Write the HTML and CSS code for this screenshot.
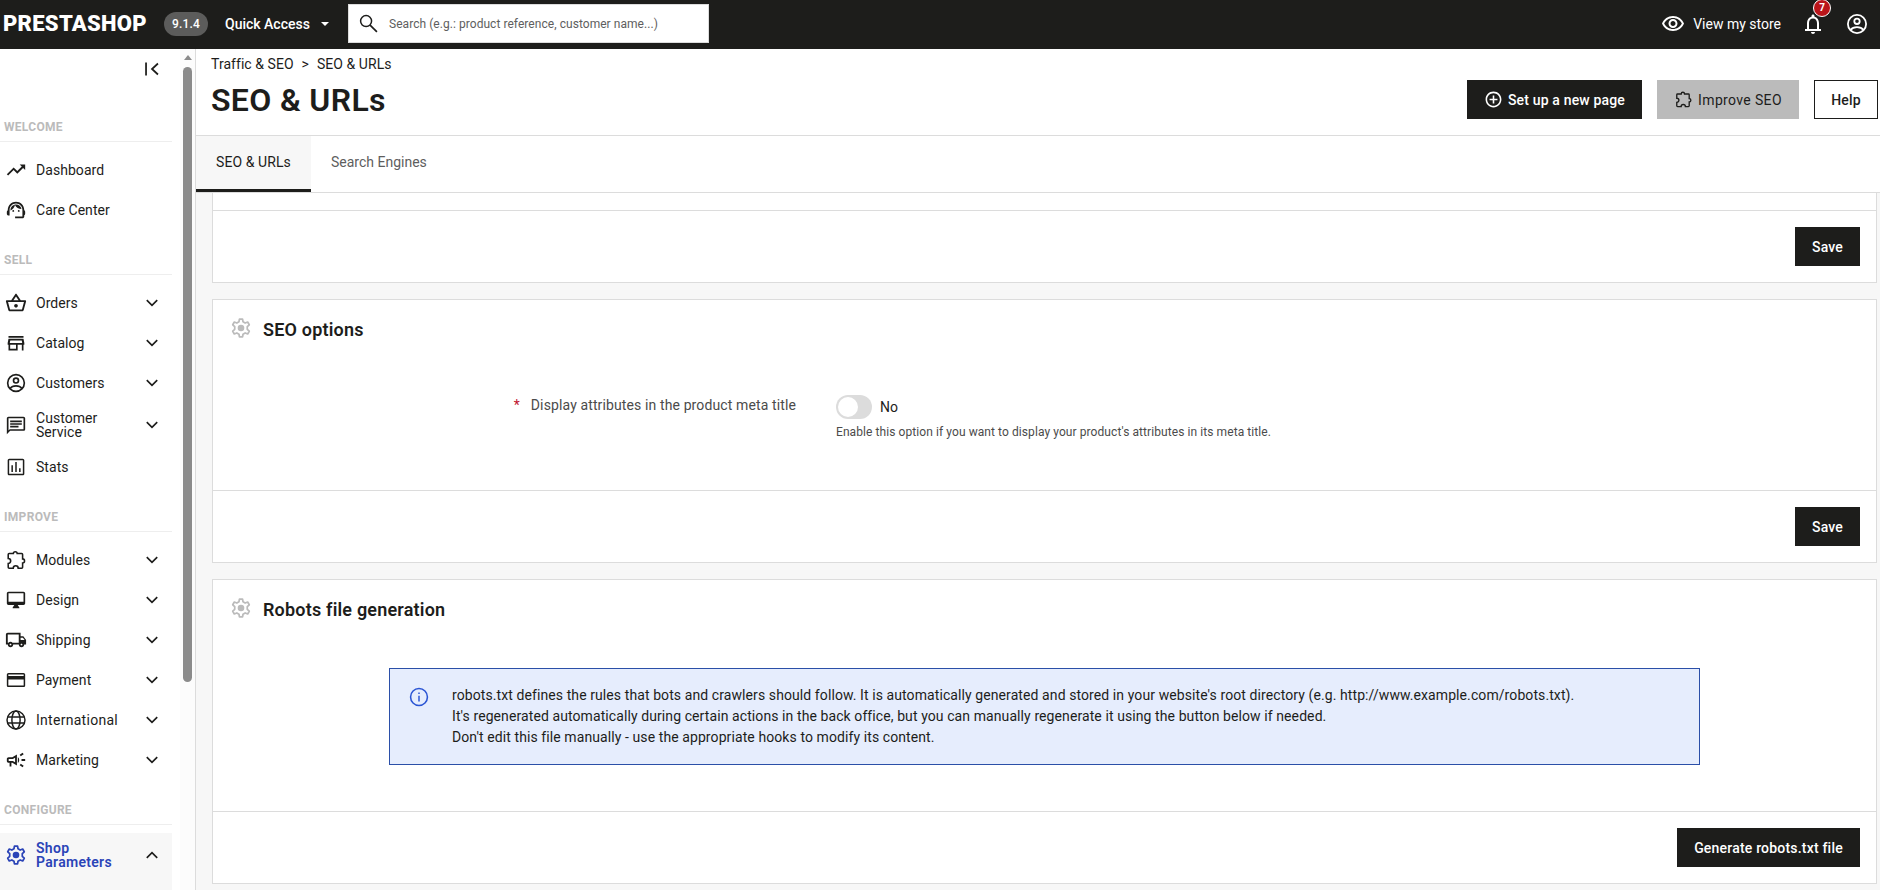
FILE: index.html
```html
<!DOCTYPE html>
<html lang="en">
<head>
<meta charset="utf-8">
<title>SEO &amp; URLs</title>
<link rel="stylesheet" href="styles.css">
</head>
<body>
<svg class="sprite" aria-hidden="true">
  <symbol id="search" viewBox="0 0 24 24"><circle cx="8.500" cy="8.500" r="6.600" fill="none" stroke="currentColor" stroke-width="1.800"/><path d="M13.300 13.300L21.500 21.500" stroke="currentColor" stroke-width="2"/></symbol>
  <symbol id="eye" viewBox="0 0 24 24"><path d="M12 6c3.790 0 7.170 2.130 8.820 5.500C19.170 14.870 15.790 17 12 17s-7.170-2.130-8.820-5.500C4.830 8.130 8.210 6 12 6m0-2C7 4 2.730 7.110 1 11.500 2.730 15.890 7 19 12 19s9.270-3.110 11-7.500C21.270 7.110 17 4 12 4zm0 5c1.380 0 2.500 1.120 2.500 2.500S13.380 14 12 14s-2.500-1.120-2.500-2.500S10.620 9 12 9m0-2c-2.480 0-4.500 2.020-4.500 4.500S9.520 16 12 16s4.500-2.020 4.500-4.500S14.480 7 12 7z"/></symbol>
  <symbol id="bell" viewBox="0 0 24 24"><path d="M12 22c1.100 0 2-.9 2-2h-4c0 1.100.9 2 2 2zM18 17v-6c0-3.070-1.630-5.640-4.500-6.320V4c0-.83-.67-1.500-1.500-1.500s-1.500.67-1.500 1.500v.68C7.640 5.360 6 7.920 6 11v6H4v2h16v-2h-2zm-2 0H8v-6c0-2.480 1.510-4.500 4-4.500s4 2.020 4 4.500v6z"/></symbol>
  <symbol id="account" viewBox="0 0 24 24"><g fill="none" stroke="currentColor" stroke-width="1.800"><circle cx="12" cy="12" r="9.100"/><circle cx="12" cy="9.300" r="2.700"/><path d="M5.500 18c1.400-1.900 3.800-2.900 6.500-2.900s5.100 1 6.500 2.900"/></g></symbol>
  <symbol id="plus" viewBox="0 0 24 24"><path d="M13 7h-2v4H7v2h4v4h2v-4h4v-2h-4V7zm-1-5C6.480 2 2 6.480 2 12s4.480 10 10 10 10-4.480 10-10S17.520 2 12 2zm0 18c-4.410 0-8-3.590-8-8s3.590-8 8-8 8 3.590 8 8-3.590 8-8 8z"/></symbol>
  <symbol id="puzzle" viewBox="0 0 24 24"><path fill="none" stroke="currentColor" stroke-width="1.700" d="M9.100 5c0-1.200.9-2.100 2.100-2.100s2.100.9 2.100 2.100h4.900c.6 0 1 .4 1 1v4.800c1.200 0 2.100 1 2.100 2.200s-.9 2.200-2.100 2.200V20c0 .6-.4 1-1 1h-3.800c0-1.500-1.200-2.700-2.700-2.700S9 19.500 9 21H4.500c-.6 0-1-.4-1-1v-4.200c1.500 0 2.700-1.200 2.700-2.700s-1.200-2.700-2.700-2.700V6c0-.6.4-1 1-1z"/></symbol>
  <symbol id="collapse" viewBox="0 0 24 24"><path d="M5.500 5v14M18.500 6l-6.500 6 6.500 6" fill="none" stroke="currentColor" stroke-width="1.900"/></symbol>
  <symbol id="trend" viewBox="0 0 24 24"><path d="M16 6l2.290 2.290-4.880 4.880-4-4L2 16.590 3.410 18l6-6 4 4 6.300-6.290L22 12V6z"/></symbol>
  <symbol id="support" viewBox="0 0 24 24"><path d="M21 12.220C21 6.730 16.740 3 12 3c-4.690 0-9 3.650-9 9.280-.6.340-1 .980-1 1.720v2c0 1.100.9 2 2 2h1v-6.100c0-3.870 3.130-7 7-7s7 3.130 7 7V19h-8v2h8c1.100 0 2-.9 2-2v-1.220c.59-.31 1-.92 1-1.640v-2.300c0-.7-.41-1.310-1-1.620z"/><circle cx="9" cy="13" r="1"/><circle cx="15" cy="13" r="1"/><path d="M18 11.030C17.520 8.180 15.040 6 12.050 6c-3.030 0-6.290 2.510-6.030 6.450 2.470-1.010 4.330-3.210 4.860-5.890 1.310 2.630 4 4.440 7.120 4.470z"/></symbol>
  <symbol id="basket" viewBox="0 0 24 24"><path d="M22 9h-4.790l-4.380-6.560c-.19-.28-.51-.42-.83-.42s-.64.14-.83.430L6.790 9H2c-.55 0-1 .45-1 1 0 .090.010.180.040.270l2.540 9.270c.23.840 1 1.460 1.920 1.460h13c.92 0 1.690-.62 1.930-1.460l2.540-9.270L23 10c0-.55-.45-1-1-1zM12 4.800L14.800 9H9.200L12 4.800zM18.500 19l-12.990.010L3.310 11H20.700l-2.200 8zM12 13c-1.100 0-2 .9-2 2s.9 2 2 2 2-.9 2-2-.9-2-2-2z"/></symbol>
  <symbol id="store" viewBox="0 0 24 24"><path d="M18.860 9l.6 3H4.540l.6-3h13.720M21 3.500H3v2.100h18V3.500zm0 3.500H3l-1 5v2h1v7h11v-7h5v7h2v-7h1v-2l-1-5zM5 19v-5h7v5H5z"/></symbol>
  <symbol id="chat" viewBox="0 0 24 24"><path d="M3 3.800h18v13.400H4.500L3 18.700V3.800m0-1.800c-1.100 0-2 .9-2 2v19l4-4h16c1.100 0 2-.9 2-2V4c0-1.100-.9-2-2-2H3zm2 11h10v2H5v-2zm0-3.200h14v2H5v-2zm0-3.200h14v2H5v-2z"/></symbol>
  <symbol id="stats" viewBox="0 0 24 24"><path d="M20 2H4c-1.100 0-2 .9-2 2v16c0 1.100.9 2 2 2h16c1.100 0 2-.9 2-2V4c0-1.100-.9-2-2-2zm.2 18.200H3.800V3.800h16.400v16.400zM6.500 10h1.800v8H6.500zm4.600-4h1.800v12h-1.800zm4.600 7.500h1.800V18h-1.800z"/></symbol>
  <symbol id="desktop" viewBox="0 0 24 24"><path d="M21 2H3c-1.100 0-2 .9-2 2v12c0 1.100.9 2 2 2h7l-2 3v1h8v-1l-2-3h7c1.100 0 2-.9 2-2V4c0-1.100-.9-2-2-2zm0 12H3V4h18v10z"/></symbol>
  <symbol id="truck" viewBox="0 0 24 24"><path d="M20 8h-3V4H3c-1.100 0-2 .9-2 2v11h2c0 1.660 1.340 3 3 3s3-1.340 3-3h6c0 1.660 1.340 3 3 3s3-1.340 3-3h2v-5l-3-4zm-.5 1.500l1.960 2.500H17V9.500h2.500zM6 18c-.55 0-1-.45-1-1s.45-1 1-1 1 .45 1 1-.45 1-1 1zm2.220-3c-.55-.61-1.330-1-2.220-1s-1.670.39-2.220 1H3V6h12v9H8.220zM18 18c-.55 0-1-.45-1-1s.45-1 1-1 1 .45 1 1-.45 1-1 1z"/></symbol>
  <symbol id="card" viewBox="0 0 24 24"><path d="M21 3.500H3c-1.110 0-2 .89-2 2v13c0 1.110.89 2 2 2h18c1.110 0 2-.89 2-2v-13c0-1.110-.89-2-2-2zm.2 15.200H2.800V11.300h18.400v7.400zm0-11.400H2.800V5.300h18.400v2z"/></symbol>
  <symbol id="globe" viewBox="0 0 24 24"><g fill="none" stroke="currentColor" stroke-width="1.600"><circle cx="12" cy="12" r="9.800"/><ellipse cx="12" cy="12" rx="4.500" ry="9.800"/><path d="M3 8.700h18M3 15.300h18"/></g></symbol>
  <symbol id="campaign" viewBox="0 0 24 24"><path d="M18 11v2h4v-2h-4zM16 17.610c.96.710 2.210 1.650 3.200 2.390.4-.53.8-1.070 1.200-1.600-.99-.74-2.240-1.680-3.200-2.400-.4.540-.8 1.080-1.200 1.610zM20.400 5.600c-.4-.53-.8-1.070-1.200-1.600-.99.740-2.240 1.680-3.200 2.400.4.530.8 1.070 1.200 1.600.96-.72 2.210-1.650 3.200-2.400zM4 9c-1.100 0-2 .9-2 2v2c0 1.100.9 2 2 2h1v4h2v-4h1l5 3V6L8 9H4zm5.030 1.710L11 9.530v4.940l-1.970-1.180-.48-.29H4v-2h4.550l.48-.29zM15.500 12c0-1.330-.58-2.530-1.500-3.350v6.690c.92-.81 1.500-2.010 1.500-3.340z"/></symbol>
  <symbol id="gear" viewBox="0 0 24 24"><path fill="none" stroke="currentColor" stroke-width="1.900" stroke-linejoin="round" d="M9.800 5.200L10.300 2.300H13.700L14.200 5.200L16.550 6.550L19.300 5.500L21 8.500L18.850 10.550V13.450L21 15.500L19.300 18.500L16.550 17.450L14.200 18.800L13.700 21.700H10.300L9.800 18.800L7.450 17.450L4.700 18.500L3 15.500L5.150 13.450V10.550L3 8.500L4.700 5.500L7.450 6.550Z"/><circle cx="12" cy="12" r="3.600"/></symbol>
  <symbol id="info" viewBox="0 0 24 24"><path d="M11.200 7h1.600v1.800h-1.600zm0 3.700h1.600v6.300h-1.600z"/><circle cx="12" cy="12" r="9.200" fill="none" stroke="currentColor" stroke-width="1.700"/></symbol>
  <symbol id="down" viewBox="0 0 24 24"><path d="M6.300 8.800L12 14.500l5.700-5.700" fill="none" stroke="currentColor" stroke-width="1.800"/></symbol>
  <symbol id="up" viewBox="0 0 24 24"><path d="M6.300 15.200L12 9.500l5.700 5.700" fill="none" stroke="currentColor" stroke-width="1.800"/></symbol>
</svg>

<header class="topbar">
  <div class="logo">PRESTASHOP</div>
  <span class="version">9.1.4</span>
  <div class="quick">Quick Access<span class="caret"></span></div>
  <div class="search"><svg class="icon"><use href="#search"/></svg><span class="placeholder">Search (e.g.: product reference, customer name...)</span></div>
  <div class="top-right">
    <svg class="icon i24"><use href="#eye"/></svg><span class="view">View my store</span>
    <div class="notif"><svg class="icon i24"><use href="#bell"/></svg><span class="badge">7</span></div>
    <svg class="icon i24"><use href="#account"/></svg>
  </div>
</header>

<div class="shell">
  <aside class="sidebar">
    <nav class="nav">
      <div class="collapse"><svg class="icon"><use href="#collapse"/></svg></div>
      <h2 class="group welcome">WELCOME</h2>
      <a class="item"><svg class="icon"><use href="#trend"/></svg><span class="name">Dashboard</span></a>
      <a class="item"><svg class="icon"><use href="#support"/></svg><span class="name">Care Center</span></a>
      <h2 class="group">SELL</h2>
      <a class="item"><svg class="icon"><use href="#basket"/></svg><span class="name">Orders</span><svg class="chev"><use href="#down"/></svg></a>
      <a class="item"><svg class="icon small"><use href="#store"/></svg><span class="name">Catalog</span><svg class="chev"><use href="#down"/></svg></a>
      <a class="item"><svg class="icon"><use href="#account"/></svg><span class="name">Customers</span><svg class="chev"><use href="#down"/></svg></a>
      <a class="item tall"><svg class="icon small"><use href="#chat"/></svg><span class="name">Customer<br>Service</span><svg class="chev"><use href="#down"/></svg></a>
      <a class="item"><svg class="icon small"><use href="#stats"/></svg><span class="name">Stats</span></a>
      <h2 class="group">IMPROVE</h2>
      <a class="item"><svg class="icon"><use href="#puzzle"/></svg><span class="name">Modules</span><svg class="chev"><use href="#down"/></svg></a>
      <a class="item"><svg class="icon small"><use href="#desktop"/></svg><span class="name">Design</span><svg class="chev"><use href="#down"/></svg></a>
      <a class="item"><svg class="icon"><use href="#truck"/></svg><span class="name">Shipping</span><svg class="chev"><use href="#down"/></svg></a>
      <a class="item"><svg class="icon small"><use href="#card"/></svg><span class="name">Payment</span><svg class="chev"><use href="#down"/></svg></a>
      <a class="item"><svg class="icon"><use href="#globe"/></svg><span class="name intl">International</span><svg class="chev"><use href="#down"/></svg></a>
      <a class="item"><svg class="icon"><use href="#campaign"/></svg><span class="name">Marketing</span><svg class="chev"><use href="#down"/></svg></a>
      <h2 class="group">CONFIGURE</h2>
      <div class="current"><a class="item tall active"><svg class="icon"><use href="#gear"/></svg><span class="name">Shop<br>Parameters</span><svg class="chev"><use href="#up"/></svg></a></div>
    </nav>
    <div class="scrollbar"><span class="arrow"></span><span class="thumb"></span></div>
  </aside>

  <main class="main">
    <div class="head">
      <div>
        <div class="crumbs"><span>Traffic &amp; SEO</span><span>&gt;</span><span>SEO &amp; URLs</span></div>
        <h1 class="title">SEO &amp; URLs</h1>
      </div>
      <div class="actions">
        <a class="btn setup"><svg class="bicon"><use href="#plus"/></svg>Set up a new page</a>
        <a class="btn improve"><svg class="bicon"><use href="#puzzle"/></svg>Improve SEO</a>
        <a class="btn help">Help</a>
      </div>
    </div>
    <div class="tabs"><a class="tab on">SEO &amp; URLs</a><a class="tab">Search Engines</a></div>
    <div class="content">
      <section class="panel first"><footer class="foot"><a class="btn">Save</a></footer></section>
      <section class="panel">
        <h3 class="ptitle"><svg class="gear"><use href="#gear"/></svg>SEO options</h3>
        <div class="form">
          <div class="label"><span class="star">*</span>Display attributes in the product meta title</div>
          <div class="field">
            <div class="switch"><span class="track"></span>No</div>
            <div class="hint">Enable this option if you want to display your product's attributes in its meta title.</div>
          </div>
        </div>
        <footer class="foot"><a class="btn">Save</a></footer>
      </section>
      <section class="panel robots">
        <h3 class="ptitle"><svg class="gear"><use href="#gear"/></svg>Robots file generation</h3>
        <div class="alert">
          <svg class="info"><use href="#info"/></svg>
          <p class="msg">robots.txt defines the rules that bots and crawlers should follow. It is automatically generated and stored in your website's root directory (e.g. http://www.example.com/robots.txt).<br>It's regenerated automatically during certain actions in the back office, but you can manually regenerate it using the button below if needed.<br>Don't edit this file manually - use the appropriate hooks to modify its content.</p>
        </div>
        <footer class="foot"><a class="btn generate">Generate robots.txt file</a></footer>
      </section>
    </div>
  </main>
</div>
</body>
</html>
```
FILE: styles.css
```css
* { box-sizing: border-box; }
body {
  margin: 0;
  height: 890px;
  overflow: hidden;
  display: flex;
  flex-direction: column;
  font: 14px/20px Roboto, "Noto Sans", sans-serif;
  color: #1d1d1b;
  background: #f7f7f7;
}
h1, h2, h3, p { margin: 0; }
svg { fill: currentColor; display: block; flex: none; }
.sprite { display: none; }
.icon { width: 22px; height: 22px; }
.small { width: 20px; height: 20px; margin: 0 1px; }
.i24 { width: 24px; height: 24px; }

/* Top bar */
.topbar {
  flex: none;
  height: 49px;
  padding: 0 11px 2px 3px;
  display: flex;
  align-items: center;
  background: #1d1d1b;
  color: #fff;
}
.logo { width: 161px; font-size: 22px; font-weight: 900; letter-spacing: .28px; }
.version {
  width: 44px;
  height: 24px;
  border-radius: 12px;
  background: #5c5c5b;
  font-size: 12px;
  font-weight: 500;
  line-height: 25px;
  text-align: center;
  letter-spacing: .2px;
}
.quick { display: flex; align-items: center; margin-left: 17px; width: 123px; font-weight: 500; }
.caret { margin-left: 11px; border: 4px solid transparent; border-top-color: #fff; border-bottom: 0; }
.search {
  display: flex;
  align-items: center;
  width: 361px;
  height: 39px;
  padding-left: 10px;
  border: 1px solid #dcdcdc;
  background: #fff;
  color: #1d1d1b;
}
.search .icon { width: 20px; height: 20px; }
.placeholder { margin-left: 10px; padding-top: 1px; font-size: 12px; letter-spacing: .05px; color: #5e5e5e; }
.top-right { margin-left: auto; display: flex; align-items: center; }
.view { margin: 0 20px 0 8px; }
.notif { position: relative; margin-right: 20px; }
.badge {
  position: absolute;
  left: 12px;
  top: -13px;
  width: 18px;
  height: 18px;
  border: 1px solid #fff;
  border-radius: 50%;
  background: #ba151a;
  font-size: 10px;
  font-weight: 700;
  line-height: 16px;
  text-align: center;
}

.shell { flex: 1; display: flex; min-height: 0; }

/* Sidebar */
.sidebar { width: 196px; flex: none; display: flex; justify-content: space-between; border-right: 1px solid #dcdcdc; background: #fff; }
.nav { width: 172px; display: flex; flex-direction: column; }
.collapse { height: 49px; padding: 9px 9px 0; display: flex; justify-content: flex-end; }
.group {
  flex: none;
  height: 45px;
  margin-bottom: 8px;
  padding: 20px 0 0 4px;
  border-bottom: 1px solid #eee;
  font-size: 12px;
  line-height: 20px;
  font-weight: 700;
  letter-spacing: .3px;
  color: #bbb;
}
.welcome { height: 44px; padding-top: 19px; }
.item { flex: none; height: 40px; padding: 0 9px 0 5px; display: flex; align-items: center; }
.tall { height: 44px; line-height: 14px; }
.name { margin-left: 9px; flex: 1; padding-bottom: 1px; letter-spacing: .05px; }
.intl { letter-spacing: .28px; }
.chev { width: 22px; height: 22px; }
.current { flex: 1; background: #f7f7f7; }
.active .name, .active .icon { color: #2b44b7; }
.active .name { font-weight: 600; letter-spacing: .3px; }
.scrollbar { width: 15px; padding: 6px 3px 0; display: flex; flex-direction: column; align-items: center; background: #fcfcfc; }
.arrow { border: 4.5px solid transparent; border-top: 0; border-bottom: 5px solid #8b8b8b; }
.thumb { width: 9px; height: 615px; margin-top: 7px; border-radius: 5px; background: #8b8b8b; }

/* Page header */
.main { flex: 1; min-width: 0; display: flex; flex-direction: column; }
.head {
  flex: none;
  height: 87px;
  padding: 5px 2px 0 15px;
  display: flex;
  justify-content: space-between;
  border-bottom: 1px solid #dcdcdc;
  background: #fff;
}
.crumbs { display: flex; gap: 8px; letter-spacing: .05px; }
.title { font-size: 32px; line-height: 40px; font-weight: 600; margin-top: 6px; letter-spacing: .34px; }
.actions { display: flex; gap: 15px; padding-top: 26px; }
.btn {
  display: flex;
  align-items: center;
  justify-content: center;
  width: 65px;
  height: 39px;
  background: #1d1d1b;
  color: #fff;
  font-weight: 500;
  letter-spacing: .2px;
}
.bicon { width: 19px; height: 19px; margin-right: 5px; }
.setup { width: 175px; letter-spacing: .16px; }
.improve { width: 142px; background: #bbb; color: #1d1d1b; font-weight: 400; letter-spacing: .35px; }
.help { width: 64px; border: 1px solid #1d1d1b; background: #fff; color: #1d1d1b; }
.generate { width: 183px; }
.tabs { flex: none; height: 57px; display: flex; border-bottom: 1px solid #dcdcdc; background: #fff; }
.tab { padding: 16px 20px 0; color: #5e5e5e; }
.on { width: 115px; border-bottom: 3px solid #1d1d1b; background: #f7f7f7; color: #1d1d1b; letter-spacing: .08px; }

/* Panels */
.content { flex: 1; min-height: 0; padding: 0 3px 0 16px; display: flex; flex-direction: column; gap: 16px; overflow: hidden; }
.panel { flex: none; height: 264px; display: flex; flex-direction: column; border: 1px solid #dcdcdc; background: #fff; }
.first { height: 90px; border-top: 0; }
.robots { height: 305px; }
.foot { height: 72px; margin-top: auto; padding: 16px; display: flex; justify-content: flex-end; border-top: 1px solid #dcdcdc; }
.ptitle { height: 60px; padding-left: 17px; display: flex; align-items: center; font-size: 18px; font-weight: 600; letter-spacing: .19px; }
.gear { width: 22px; height: 22px; margin: -4px 11px 0 0; color: #bbb; }
.form { display: grid; grid-template-columns: 583px 1fr; column-gap: 40px; padding-top: 35px; }
.label { text-align: right; color: #4b4b4b; letter-spacing: .12px; }
.star { margin-right: 11px; color: #c0152f; }
.switch { display: flex; align-items: center; gap: 8px; height: 24px; }
.track { width: 36px; height: 24px; border-radius: 12px; background: #dcdcdc; display: flex; align-items: center; padding-left: 2px; }
.track::before { content: ""; width: 20px; height: 20px; border-radius: 50%; background: #fff; }
.hint { margin-top: 3px; font-size: 12px; letter-spacing: .08px; color: #4b4b4b; }
.alert { margin: 28px 176px 0; height: 97px; padding: 16px 18px; display: flex; border: 1px solid #2b4fa8; background: #e6edfd; }
.info { width: 22px; height: 22px; margin-top: 1px; color: #2b55d4; }
.msg { margin-left: 22px; line-height: 21px; letter-spacing: .09px; white-space: nowrap; }
```
